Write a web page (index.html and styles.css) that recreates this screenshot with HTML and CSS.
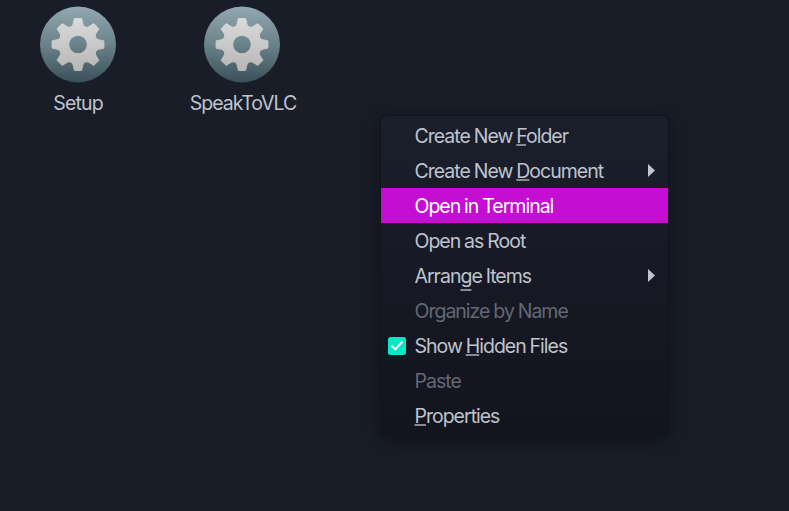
FILE: index.html
```html
<!DOCTYPE html>
<html lang="en">
<head>
<meta charset="utf-8">
<title>Desktop</title>
<link rel="stylesheet" href="styles.css">
</head>
<body>
<svg class="defs" aria-hidden="true">
  <defs>
    <linearGradient id="disc" gradientUnits="userSpaceOnUse" x1="0" y1="-38" x2="0" y2="38"><stop offset="0" stop-color="#93a8b2"/><stop offset=".5" stop-color="#6a828a"/><stop offset="1" stop-color="#3b505a"/></linearGradient>
    <linearGradient id="metal" gradientUnits="userSpaceOnUse" x1="0" y1="-26" x2="0" y2="26"><stop offset="0" stop-color="#dadada"/><stop offset="1" stop-color="#b7b7b7"/></linearGradient>
    <symbol id="gear" viewBox="-38 -38 76 76">
      <circle r="38" fill="url(#disc)"/>
      <path fill="url(#metal)" stroke="url(#metal)" stroke-width="1" stroke-linejoin="round" d="M-4.6-21.5-3.6-25.9H3.6L4.6-21.5A4.3 4.3 0 0 0 11.9-18.5L15.8-20.9 20.9-15.8 18.5-11.9A4.3 4.3 0 0 0 21.5-4.6L25.9-3.6V3.6L21.5 4.6A4.3 4.3 0 0 0 18.5 11.9L20.9 15.8 15.8 20.9 11.9 18.5A4.3 4.3 0 0 0 4.6 21.5L3.6 25.9H-3.6L-4.6 21.5A4.3 4.3 0 0 0-11.9 18.5L-15.8 20.9-20.9 15.8-18.5 11.9A4.3 4.3 0 0 0-21.5 4.6L-25.9 3.6V-3.6L-21.5-4.6A4.3 4.3 0 0 0-18.5-11.9L-20.9-15.8-15.8-20.9-11.9-18.5A4.3 4.3 0 0 0-4.6-21.5Z"/>
      <circle r="8.8" fill="url(#disc)"/>
    </symbol>
  </defs>
</svg>
<main class="desktop">
  <div class="launcher"><svg class="icon"><use href="#gear"/></svg><span class="label">Setup</span></div>
  <div class="launcher"><svg class="icon"><use href="#gear"/></svg><span class="label vlc">SpeakToVLC</span></div>
</main>
<ul class="menu">
  <li class="item"><span>Create New <u>F</u>older</span></li>
  <li class="item"><span>Create New <u>D</u>ocument</span><svg class="arrow" viewBox="0 0 7 13"><path d="M0 0 7 6.5 0 13Z"/></svg></li>
  <li class="item active"><span>Open in Terminal</span></li>
  <li class="item"><span>Open as Root</span></li>
  <li class="item"><span>Arran<u class="low">g</u>e Items</span><svg class="arrow" viewBox="0 0 7 13"><path d="M0 0 7 6.5 0 13Z"/></svg></li>
  <li class="item disabled"><span>Organize by Name</span></li>
  <li class="item checked"><svg class="check" viewBox="0 0 18 18"><rect width="18" height="18" rx="2.5"/><path d="M4 9.2 7.3 12.3 14 5.3"/></svg><span>Show <u>H</u>idden Files</span></li>
  <li class="item disabled"><span>Paste</span></li>
  <li class="item"><span><u>P</u>roperties</span></li>
</ul>
</body>
</html>
```
FILE: styles.css
```css
* { box-sizing: border-box; }
body {
  margin: 0;
  height: 511px;
  overflow: hidden;
  background: #191d28;
  color: #bfc3cd;
  font: 380 19.5px/24px Inter, "Liberation Sans", sans-serif;
  letter-spacing: -1px;
  word-spacing: -.6px;
}
.defs { position: absolute; width: 0; height: 0; }
.desktop { display: flex; padding-top: 6px; margin-left: -4px; }
.launcher { width: 164px; display: flex; flex-direction: column; align-items: center; gap: 8px; }
.icon { width: 76px; height: 77px; display: block; }
.label { white-space: nowrap; letter-spacing: -.85px; }
.vlc { padding-left: 2px; letter-spacing: -1px; }
.menu {
  position: absolute;
  left: 381px;
  top: 116px;
  width: 287px;
  height: 320px;
  margin: 0;
  padding: 2px 0 3px;
  list-style: none;
  border-radius: 6px;
  background: linear-gradient(#1b1f2c, #12141e);
  box-shadow: 0 0 0 1px #12141d, 0 3px 18px rgba(5, 6, 12, .5);
}
.item { height: 35px; display: flex; align-items: center; justify-content: space-between; padding: 0 13px 0 33.5px; white-space: nowrap; }
.item span { padding-top: 1px; }
.active { background: #c50ed2; color: #fff; }
.disabled { color: #656873; }
.checked { justify-content: flex-start; padding-left: 7px; gap: 8.5px; }
.check { width: 18px; height: 18px; fill: #00e8c6; }
.check path { fill: none; stroke: #fff; stroke-width: 2; stroke-linecap: round; stroke-linejoin: round; }
.arrow { width: 7px; height: 13px; fill: #c0c5d0; }
u { text-decoration: underline 2px; text-decoration-color: #858a97; text-underline-offset: 1px; text-decoration-skip-ink: none; }
.low { text-underline-offset: 6px; }
```
